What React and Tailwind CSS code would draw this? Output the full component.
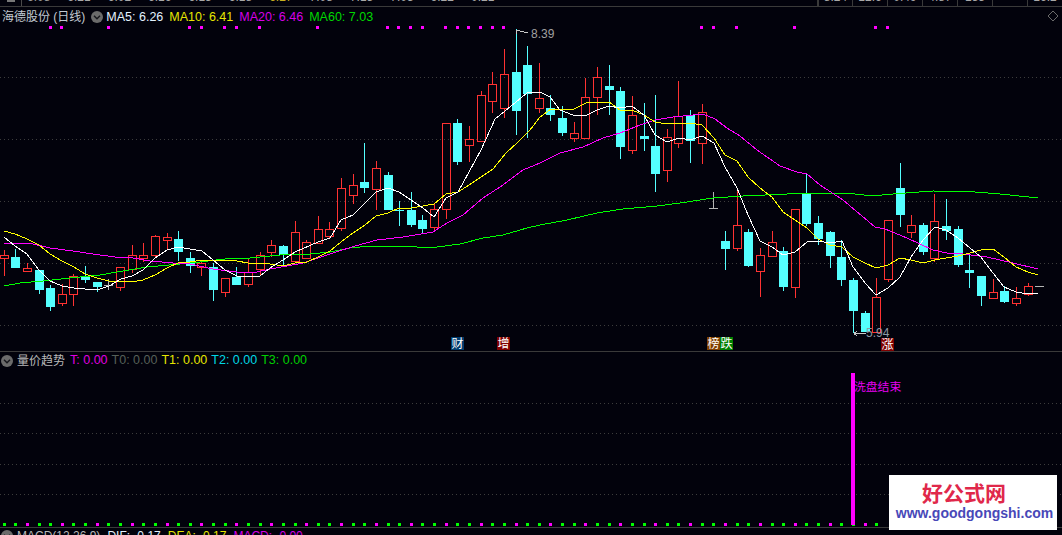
const C = [
["r",250,255,258,276],["c",249,257,268,268],["r",263,268,271,272],["c",270,270,290,294],["c",285,288,307,311],["r",284,294,303,306],["r",274,276,294,306],["c",266,276,280,283],["c",282,282,287,292],["d",279,285,285,290],
["r",267,267,287,291],["r",245,255,269,273],["r",243,255,258,262],["r",235,236,255,258],["r",233,237,240,250],["c",231,239,252,261],["c",252,258,266,273],["r",260,263,267,276],["c",263,267,290,301],["r",278,278,292,297],
["c",267,277,285,285],["r",259,272,284,287],["r",252,255,269,276],["r",240,245,252,257],["c",245,246,255,267],["r",221,232,261,261],["r",240,242,258,258],["r",216,229,243,243],["r",222,229,236,239],["r",178,188,228,231],
["r",174,185,195,204],["c",143,182,188,193],["r",161,168,189,210],["c",172,175,210,210],["e",201,210,210,226],["c",192,210,225,227],["c",215,220,229,234],["r",204,209,227,231],["r",123,123,209,219],["c",119,123,162,165],
["r",126,139,145,162],["r",91,95,141,141],["r",72,84,101,113],["r",49,74,108,118],["c",29,72,111,135],["c",46,65,94,138],["r",63,98,108,113],["c",95,108,115,121],["c",106,118,133,136],["r",122,133,138,142],
["r",78,97,138,138],["r",67,77,97,115],["c",65,86,90,115],["c",87,91,147,159],["r",96,115,150,154],["c",103,136,139,151],["c",95,146,174,192],["r",129,137,170,182],["r",81,116,143,148],["c",110,115,141,163],
["r",104,112,143,164],["d",192,208,208,208],["c",231,241,249,270],["r",190,225,248,251],["c",229,232,266,267],["r",248,255,271,297],["r",231,242,256,256],["c",247,251,287,291],["r",209,209,287,298],["c",174,194,224,226],
["c",216,223,239,245],["c",231,232,256,268],["c",240,257,280,286],["c",278,280,311,333],["c",311,313,332,332],["r",278,297,332,332],["r",220,220,279,282],["c",163,188,215,227],["r",215,225,232,238],["c",223,225,252,255],
["r",194,221,258,262],["c",199,226,231,240],["c",226,229,265,267],["c",254,270,273,288],["c",276,276,296,306],["r",279,292,298,299],["c",286,291,302,303],["r",287,298,303,306],["r",283,286,294,296],["d",286,286,286,286],
];
const cx = (i) => Math.round(3.6 + i * 11.636);
const white = "4,237 15,246 27,254 39,270 50,281 62,286 74,288 85,289 97,290 109,286 121,279 132,276 143,270 155,258 167,250 178,247 190,249 202,251 213,260 225,270 237,276 248,277 260,276 270,268 283,260 295,252 318,242 330,238 341,220 353,215 365,203 376,192 388,188 399,192 411,200 423,208 434,217 446,198 458,192 469,172 481,150 495,119 505,111 516,102 527,93 540,92 550,97 560,110 573,115 587,115 597,110 609,106 620,108 632,106 644,115 655,135 667,142 679,138 690,140 702,136 714,143 725,167 737,188 748,215 760,241 772,247 783,255 795,252 807,242 818,241 830,243 842,241 853,267 865,283 876,295 888,288 900,277 911,257 923,240 935,227 946,230 958,238 970,248 981,257 993,273 1004,287 1016,292 1028,294 1038,293";
const yellow = "4,231 15,234 27,239 39,245 50,254 62,261 74,267 85,274 97,278 109,281 120,282 137,281 143,280 155,275 167,268 178,263 190,262 202,260 213,261 225,260 237,261 248,263 260,263 270,264 283,266 295,263 307,262 318,257 330,251 341,242 353,233 365,225 376,216 388,213 399,208 411,208 423,206 434,204 446,194 458,192 469,185 481,177 493,169 506,153 518,142 530,130 540,117 551,109 562,110 574,109 586,103 597,102 609,102 620,110 632,110 644,115 655,122 667,124 679,123 690,123 702,125 714,138 725,155 737,161 748,177 760,188 772,197 783,212 795,220 807,228 818,239 830,245 842,247 853,257 865,263 876,268 888,265 900,258 911,260 923,263 935,260 946,258 958,256 970,253 981,250 993,249 1004,257 1016,267 1028,272 1038,275";
const magenta = "4,243 33,244 50,248 73,251 93,254 115,257 133,258 150,261 173,263 190,264 213,269 237,272 257,272 270,269 287,266 303,263 333,253 355,246 377,240 403,237 433,232 447,223 463,215 483,198 503,185 523,170 540,163 560,153 583,147 603,138 620,133 640,125 655,120 673,117 703,114 715,119 727,128 740,136 757,150 780,166 797,172 807,174 820,185 843,200 875,227 885,229 907,238 933,250 947,253 963,254 987,257 1013,263 1038,269";
const green = "4,286 20,283 43,281 70,278 100,275 123,271 147,267 180,264 200,262 233,258 250,258 270,256 290,254 310,254 330,252 350,248 370,246 393,246 417,247 437,247 460,244 483,238 503,235 527,228 540,225 567,220 597,213 623,209 657,206 680,203 713,198 743,196 787,194 800,193 847,193 872,196 893,194 933,191 975,192 1000,194 1038,198";
const topDots = [50,61,108,189,201,224,236,259,317,387,398,410,422,445,457,468,480,492,503,701,713,736,794,875,887];
const RED = "#ff3232", CY = "#54ffff", GR = "#b4b4b4";

function Candle({ d, i }) {
  const [t, wt, bt, bb, wb] = d;
  const x = cx(i);
  if (t === "d" || t === "e") {
    const col = t === "d" ? GR : CY;
    return (
      <g stroke={col}>
        {wb > wt && <line x1={x + 0.5} x2={x + 0.5} y1={wt} y2={wb} />}
        <line x1={x - 4} x2={x + 5} y1={bt + 0.5} y2={bt + 0.5} />
      </g>
    );
  }
  if (t === "c") {
    return (
      <g>
        <line x1={x + 0.5} x2={x + 0.5} y1={wt} y2={wb} stroke={CY} />
        <rect x={x - 4} y={bt} width={9} height={bb - bt} fill={CY} />
      </g>
    );
  }
  return (
    <g stroke={RED}>
      {bt > wt && <line x1={x + 0.5} x2={x + 0.5} y1={wt} y2={bt} />}
      {wb > bb && <line x1={x + 0.5} x2={x + 0.5} y1={bb} y2={wb} />}
      <rect x={x - 3.5} y={bt + 0.5} width={8} height={bb - bt} fill="none" />
    </g>
  );
}

function Chevron() {
  return (
    <svg viewBox="0 0 12 12" className="w-3 h-3 shrink-0">
      <circle cx="6" cy="6" r="6" fill="#6b6b6b" />
      <path d="M3 4.8 L6 7.8 L9 4.8" fill="none" stroke="#17171c" strokeWidth="1.4" />
    </svg>
  );
}

function Dotted({ ys }) {
  return ys.map((y) => (
    <line key={y} x1="0" x2="1062" y1={y + 0.5} y2={y + 0.5} stroke="#3c3c3c" strokeDasharray="1 3" />
  ));
}

function Badge({ bg, ch }) {
  return <span className={`w-[13px] h-[13px] flex items-center justify-center text-[12px] leading-none text-white ${bg}`}>{ch}</span>;
}

const topLeft = [["6.08","#9a9a9a"],["6.21","#a8a8a8"],["6.02","#a8a8a8"],["6.16","#a8a8a8"],["6.13","#a8a8a8"],["6.18","#a8a8a8"],["6.27","#c8b020"],["7.08","#a8a8a8"],["7.15","#a8a8a8"],["7.03","#a8a8a8"],["6.22","#a8a8a8"],["0.21","#a8a8a8"]];
const topRight = ["8.24","12.6","0.49","4.87","135","","16.2"];

export default function App() {
  const dotCols = C.slice(0, 76);
  return (
    <div className="w-[1062px] h-[535px] overflow-hidden flex flex-col bg-[#02020c] font-['Liberation_Sans','Noto_Sans_CJK_SC',sans-serif] text-[12.5px] leading-none">
      {/* clipped quote strip */}
      <div className="h-[7px] shrink-0 flex border-b border-[#3a3a3a] overflow-hidden text-[12px]">
        <div className="w-[22px] border-r border-[#4a4a4a] shrink-0 flex justify-center">
          <div className="w-[8px] h-[2px] bg-[#777]" />
        </div>
        <div className="flex-1 flex gap-[17px] pl-[5px] -mt-[9px]">
          {topLeft.map(([t, c], i) => (
            <span key={i} className="leading-[12px] h-[12px]" style={{ color: c }}>{t}</span>
          ))}
        </div>
        <div className="flex shrink-0 -mb-[1px]">
          {topRight.map((t, i) => (
            <div key={i} className={`w-[35px] flex justify-center border-l border-[#3a3a3a] ${i === 0 ? "border-l-2" : ""}`}>
              <span className="leading-[12px] h-[12px] -mt-[9px] text-[#a8a8a8]">{t}</span>
            </div>
          ))}
        </div>
      </div>

      {/* main price pane */}
      <div className="relative h-[345px] shrink-0 border-b border-[#3a3a3a]">
        <svg className="absolute inset-0 w-[1062px] h-[344px]" viewBox="0 7 1062 344" shapeRendering="crispEdges">
          <Dotted ys={[77, 139, 201, 263, 325]} />
          {topDots.map((x) => <rect key={x} x={x - 1} y={26} width={3} height={3} fill="#ff00ff" />)}
          {C.map((d, i) => <Candle key={i} d={d} i={i} />)}
          <polyline points={green} fill="none" stroke="#00ff00" />
          <polyline points={magenta} fill="none" stroke="#ff00ff" />
          <polyline points={yellow} fill="none" stroke="#ffff00" />
          <polyline points={white} fill="none" stroke="#ffffff" />
          <path d="M516.5 30 L528 33 M516.5 30 L519 30 M516.5 30 L516.5 34" stroke="#c8c8c8" fill="none" />
          <path d="M854 333.5 L866 333.5 M854 333.5 L857 331 M854 333.5 L857 336" stroke="#c8c8c8" fill="none" />
          <path d="M1053 11 L1058 16 L1053 21 L1048 16 Z" fill="none" stroke="#6a6a6a" />
        </svg>
        <div className="relative flex items-center h-[19px] pt-[1px] whitespace-nowrap">
          <span className="ml-[2px] text-[12px] text-[#c2cad2]">海德股份 (日线)</span>
          <span className="ml-[6px]"><Chevron /></span>
          <span className="ml-[3px] text-[#e4f2ff]">MA5: 6.26</span>
          <span className="ml-[6px] text-[#e6e600]">MA10: 6.41</span>
          <span className="ml-[6px] text-[#d600e6]">MA20: 6.46</span>
          <span className="ml-[6px] text-[#00d800]">MA60: 7.03</span>
        </div>
        <span className="absolute left-[531px] top-[21px] text-[12px] text-[#a0a0a0]">8.39</span>
        <span className="absolute left-[866px] top-[320px] text-[12px] text-[#8c9aa6]">5.94</span>
        <div className="absolute left-[451px] top-[330px]"><Badge bg="bg-[#003c6e]" ch="财" /></div>
        <div className="absolute left-[497px] top-[330px]"><Badge bg="bg-[#800000]" ch="增" /></div>
        <div className="absolute left-[707px] top-[330px] flex">
          <Badge bg="bg-[#804000]" ch="榜" />
          <Badge bg="bg-[#008000]" ch="跌" />
        </div>
        <div className="absolute left-[881px] top-[331px]"><Badge bg="bg-[#800000]" ch="涨" /></div>
      </div>

      {/* indicator pane */}
      <div className="relative h-[176px] shrink-0 border-b border-[#3a3a3a]">
        <svg className="absolute inset-0 w-[1062px] h-[175px]" viewBox="0 352 1062 175" shapeRendering="crispEdges">
          <Dotted ys={[403, 433, 464, 494]} />
          {dotCols.map((d, i) => (
            <rect key={i} x={cx(i) - 1} y={523} width={3} height={3} fill={i % 3 === 2 ? "#ff00ff" : "#00ff00"} />
          ))}
          <rect x={851} y={373} width={4} height={152} fill="#ff00ff" />
        </svg>
        <div className="relative flex items-center h-[17px] whitespace-nowrap">
          <span className="ml-[1px]"><Chevron /></span>
          <span className="ml-[4px] text-[#b8b8b8] text-[12px]">量价趋势</span>
          <span className="ml-[5px] text-[#e000e0]">T: 0.00</span>
          <span className="ml-[4px] text-[#566058]">T0: 0.00</span>
          <span className="ml-[4px] text-[#e6e600]">T1: 0.00</span>
          <span className="ml-[4px] text-[#00d8e6]">T2: 0.00</span>
          <span className="ml-[4px] text-[#00d000]">T3: 0.00</span>
        </div>
        <span className="absolute left-[854px] top-[30px] text-[11.8px] text-[#e600f0] whitespace-nowrap">洗盘结束</span>
        <div className="absolute left-[889px] top-[123px] w-[168px] h-[55px] bg-white flex flex-col items-center z-10">
          <span className="mt-[8px] ml-[-18px] text-[21px] leading-[22px] font-bold text-[#e0284a]">好公式网</span>
          <span className="mt-[1px] ml-[3px] text-[14px] leading-[15px] font-bold text-[#4848b8]">www.goodgongshi.com</span>
        </div>
      </div>

      {/* MACD strip, cut by the window edge */}
      <div className="flex items-start whitespace-nowrap pt-[2px] overflow-hidden text-[12px]">
        <span className="ml-[1px]"><Chevron /></span>
        <span className="ml-[4px] text-[#b8b8b8]">MACD(12,26,9)</span>
        <span className="ml-[7px] text-[#e4f2ff]">DIF: -0.17</span>
        <span className="ml-[7px] text-[#e6e600]">DEA: -0.17</span>
        <span className="ml-[7px] text-[#d600e6]">MACD: -0.00</span>
      </div>
    </div>
  );
}
